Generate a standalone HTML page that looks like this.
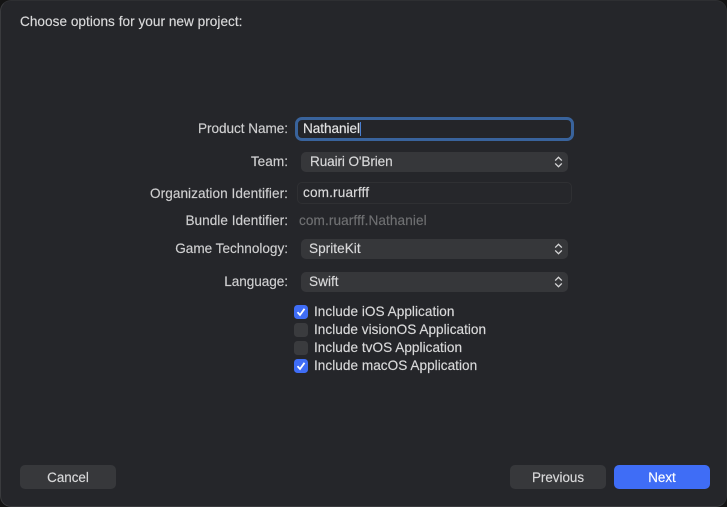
<!DOCTYPE html>
<html>
<head>
<meta charset="utf-8">
<style>
html,body{margin:0;padding:0;width:727px;height:507px;overflow:hidden;background:#141414;}
#win{position:absolute;left:0;top:0;width:727px;height:507px;background:#25262a;border-radius:11px;box-sizing:border-box;border:1px solid #333437;border-top-color:#2e2f32;border-right-color:#2a2b2e;border-left-color:#3a3b3e;border-bottom-color:#3a3b3e;}
.t{position:absolute;font-family:"Liberation Sans",sans-serif;font-size:13.6px;line-height:16px;white-space:nowrap;letter-spacing:.03px;color:#d9d9da;-webkit-text-stroke:.15px currentColor;}
.l{text-align:right;right:439px;color:#cfcfd0;}
.sel{position:absolute;left:301px;width:267px;height:20px;background:#36373a;border-radius:5px;}
.chev{position:absolute;left:553px;width:11px;height:14px;}
.cb{position:absolute;left:294px;width:14px;height:14px;border-radius:3.5px;background:#3a3b3e;}
.on{background:#3f6df6;}
.btn{position:absolute;top:465px;height:24px;width:96px;border-radius:5px;background:#37383b;text-align:center;font-family:"Liberation Sans",sans-serif;font-size:13.4px;line-height:25px;letter-spacing:0;color:#d9d9da;-webkit-text-stroke:.15px currentColor;}
</style>
</head>
<body>
<div id="win"></div>
<div class="t" style="left:20px;top:14px">Choose options for your new project:</div>

<div class="t l" style="top:121px;letter-spacing:-.05px">Product Name:</div>
<div style="position:absolute;left:295px;top:117px;width:279px;height:24px;box-sizing:border-box;border:3px solid #39639c;border-radius:7px;background:#242529"></div>
<div class="t" style="left:303px;top:121px;color:#e4e4e5;letter-spacing:-.05px">Nathaniel</div>
<div style="position:absolute;left:360px;top:122px;width:1px;height:14px;background:#4a7fd0"></div>

<div class="t l" style="top:154px">Team:</div>
<div class="sel" style="top:152px"></div>
<div class="t" style="left:310px;top:154px;letter-spacing:-.12px">Ruairi O'Brien</div>
<svg class="chev" style="top:155px" viewBox="0 0 11 14"><path d="M2.2 5.6 5.5 2.3 8.8 5.6M2.2 8.4 5.5 11.7 8.8 8.4" fill="none" stroke="#d6d6d7" stroke-width="1.3"/></svg>

<div class="t l" style="top:186px;letter-spacing:.05px">Organization Identifier:</div>
<div style="position:absolute;left:297px;top:182px;width:275px;height:22px;box-sizing:border-box;border:1px solid #2f3033;border-radius:5px;background:#26272b"></div>
<div class="t" style="left:303px;top:185px;letter-spacing:.15px">com.ruarfff</div>

<div class="t l" style="top:213px">Bundle Identifier:</div>
<div class="t" style="left:299px;top:213px;color:#6f7072;letter-spacing:.1px">com.ruarfff.Nathaniel</div>

<div class="t l" style="top:241px;letter-spacing:-.02px">Game Technology:</div>
<div class="sel" style="top:239px"></div>
<div class="t" style="left:309px;top:241px">SpriteKit</div>
<svg class="chev" style="top:242px" viewBox="0 0 11 14"><path d="M2.2 5.6 5.5 2.3 8.8 5.6M2.2 8.4 5.5 11.7 8.8 8.4" fill="none" stroke="#d6d6d7" stroke-width="1.3"/></svg>

<div class="t l" style="top:274px;letter-spacing:-.05px">Language:</div>
<div class="sel" style="top:272px"></div>
<div class="t" style="left:309px;top:274px">Swift</div>
<svg class="chev" style="top:275px" viewBox="0 0 11 14"><path d="M2.2 5.6 5.5 2.3 8.8 5.6M2.2 8.4 5.5 11.7 8.8 8.4" fill="none" stroke="#d6d6d7" stroke-width="1.3"/></svg>

<div class="cb on" style="top:305px"><svg width="14" height="14" viewBox="0 0 14 14" style="display:block"><path d="M3.5 7.2 6 10 10.5 3.8" fill="none" stroke="#fff" stroke-width="1.8"/></svg></div>
<div class="t" style="left:314px;top:304px">Include iOS Application</div>
<div class="cb" style="top:323px"></div>
<div class="t" style="left:314px;top:322px;letter-spacing:.02px">Include visionOS Application</div>
<div class="cb" style="top:341px"></div>
<div class="t" style="left:314px;top:340px">Include tvOS Application</div>
<div class="cb on" style="top:359px"><svg width="14" height="14" viewBox="0 0 14 14" style="display:block"><path d="M3.5 7.2 6 10 10.5 3.8" fill="none" stroke="#fff" stroke-width="1.8"/></svg></div>
<div class="t" style="left:314px;top:358px">Include macOS Application</div>

<div class="btn" style="left:20px">Cancel</div>
<div class="btn" style="left:510px">Previous</div>
<div class="btn" style="left:614px;background:#3f6df6;color:#fff">Next</div>
</body>
</html>
